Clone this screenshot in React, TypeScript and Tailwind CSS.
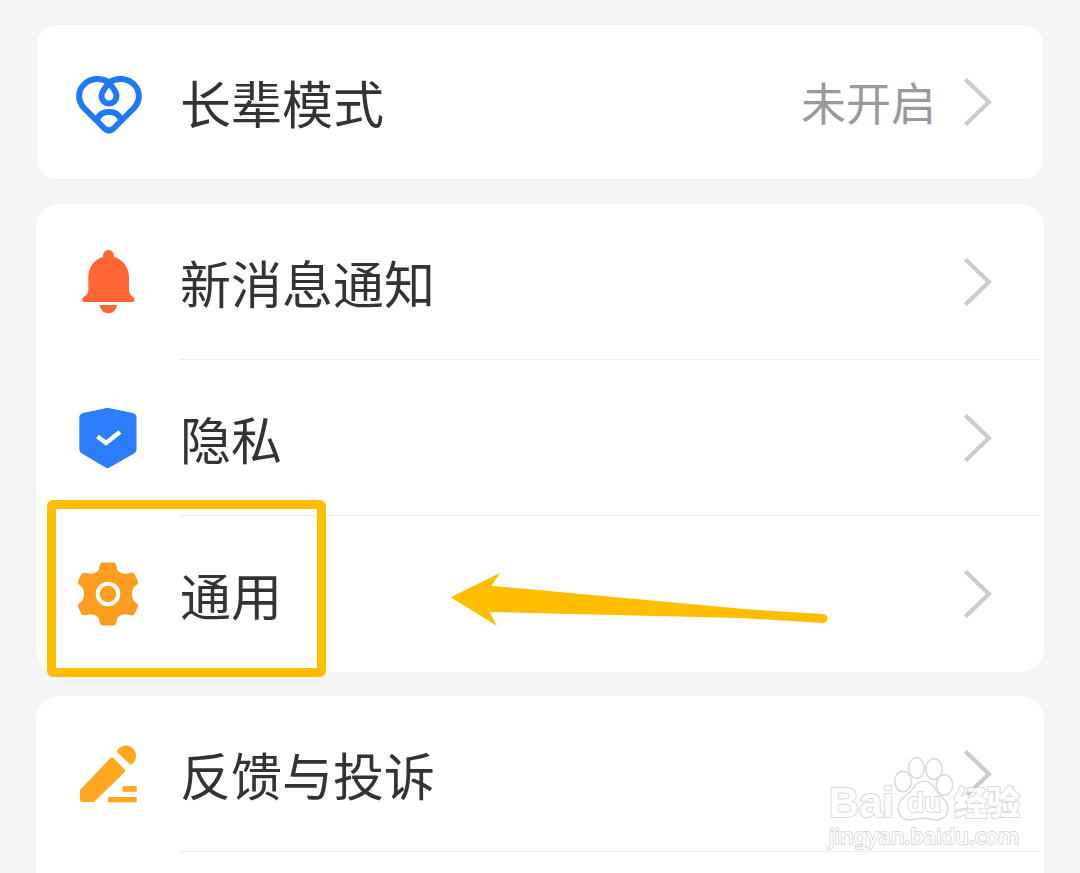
import type { ReactNode } from 'react';

type SettingRowProps = {
  icon: ReactNode;
  label: string;
  value?: string;
  divider?: boolean;
  children?: ReactNode;
};

export default function App() {
  return (
    <main className="flex min-h-screen flex-col gap-6 bg-[#f5f5f5] px-9 pt-6 font-['Noto_Sans_CJK_SC',sans-serif]">
      <section className="rounded-[20px] bg-white inset-ring inset-ring-[#f0f0f0]">
        <SettingRow icon={<IconHeart />} label="长辈模式" value="未开启" />
      </section>

      <section className="rounded-3xl bg-white">
        <SettingRow icon={<IconBell />} label="新消息通知" divider />
        <SettingRow icon={<IconShield />} label="隐私" divider />
        <SettingRow icon={<IconGear />} label="通用">
          <span
            className="absolute -top-4 left-[11px] h-[177px] w-[279px] rounded-md border-[9px] border-[#ffbf00]"
            aria-hidden="true"
          />
          <Arrow className="absolute left-[414px] top-14" />
        </SettingRow>
      </section>

      <section className="grow rounded-t-3xl bg-white">
        <SettingRow icon={<IconPencil />} label="反馈与投诉" divider>
          <Watermark />
        </SettingRow>
      </section>
    </main>
  );
}

function SettingRow({ icon, label, value, divider, children }: SettingRowProps) {
  return (
    <div className="relative">
      <a href="#" className="flex items-center gap-[38px] pl-10">
        <span className="size-[66px] shrink-0">{icon}</span>
        <span
          className={`mr-1 flex grow items-center gap-7 border-b pr-12 ${divider ? 'border-[#eeeeee]' : 'border-transparent'}`}
        >
          <span className="grow whitespace-nowrap pb-[39px] pt-[41px] text-[51px] leading-[75px] text-[#333333]">{label}</span>
          {value && <span className="whitespace-nowrap text-[45px] leading-[75px] text-[#999999]">{value}</span>}
          <Chevron />
        </span>
      </a>
      {children}
    </div>
  );
}

function Chevron() {
  return (
    <svg viewBox="0 0 28 48" fill="none" stroke="#cacaca" strokeWidth="4" className="h-12 w-7 shrink-0" aria-hidden="true">
      <path d="M1.5 1.5 25 24 1.5 46.5" />
    </svg>
  );
}

function Arrow({ className }: { className?: string }) {
  return (
    <svg width="380" height="56" viewBox="0 0 380 56" fill="#ffbf00" className={className} aria-hidden="true">
      <path d="M.7 25.3 50 1 41.3 13.7 297 37.3 373 42a4.5 4.5 0 0 1 0 9L290 46 39.7 40 47 54Z" />
    </svg>
  );
}

function Watermark() {
  return (
    <div
      className="pointer-events-none absolute right-6 top-[61px] flex flex-col text-white opacity-80 [-webkit-text-stroke:2px_#d2d2d2] [paint-order:stroke_fill]"
      aria-hidden="true"
    >
      <div className="flex h-16 items-end">
        <span className="font-['Liberation_Sans',sans-serif] text-[42px] font-bold leading-9">Bai</span>
        <span className="relative">
          <svg width="60" height="64" viewBox="0 0 60 64" fill="white" stroke="#d2d2d2" strokeWidth="3">
            <ellipse cx="9" cy="24.5" rx="7.5" ry="9.5" />
            <ellipse cx="22.5" cy="11" rx="7" ry="9.5" />
            <ellipse cx="40" cy="12" rx="7.5" ry="9.5" />
            <ellipse cx="50.5" cy="28" rx="7.5" ry="9.5" />
            <path d="M30 25c-8 0-10 8-15 12-6 5-11 9-10 16 1 7 7 10 13 9 7-2 15-2 22 0 6 1 12-2 13-9 1-7-4-11-9-16-4-4-6-12-14-12Z" />
          </svg>
          <span className="absolute inset-x-0 bottom-1 text-center font-['Liberation_Sans',sans-serif] text-[28px] font-bold leading-7">
            du
          </span>
        </span>
        <span className="text-[33px] font-black leading-10">经验</span>
      </div>
      <span className="font-['Noto_Sans',sans-serif] text-[22px] leading-7">jingyan.baidu.com</span>
    </div>
  );
}

function IconHeart() {
  return (
    <svg viewBox="0 0 66 66" fill="none" stroke="#1f78f5" strokeWidth="6" strokeLinejoin="round" aria-hidden="true">
      <path d="M33 13.5C25 8 14 9 8 15.5 1.5 22 1.5 32 8 39L28.5 59.5Q33 63.5 37.5 59.5L58 39C64.5 32 64.5 22 58 15.5 52 9 41 8 33 13.5Z" />
      <path d="M33 14C30 18 25.5 22 25.5 27a7.5 7.5 0 0 0 15 0C40.5 22 36 18 33 14Z" />
      <path d="M21.5 50C23 45.5 27.5 43 33 43s10 2.5 11.5 7" />
    </svg>
  );
}

function IconBell() {
  return (
    <svg viewBox="0 0 66 66" fill="#ff6633" aria-hidden="true">
      <path d="M27 8C27 3.5 29 1 32.5 1S38 3.5 38 8C47 10.5 53 18.5 53 28v13c0 3 1.5 5 4 7 2.5 2 1.5 5-1 5H8.5c-2.5 0-3.5-3-1-5 3.5-2 4.8-4 4.8-7V28C12.3 18.5 18 10.5 27 8Z" />
      <path d="M23.7 56H41C40 61.5 37 64.3 32.4 64.3S24.7 61.5 23.7 56Z" />
    </svg>
  );
}

function IconShield() {
  return (
    <svg viewBox="0 0 66 66" aria-hidden="true">
      <path
        d="M29.5 3.2q2-.8 4 0L57 8q3.5 1 3.5 4.5V44q0 3-2.5 4.5L33.5 62.5q-2 1.2-4 0L6 48.5Q3.3 47 3.3 44V12.5Q3.3 9 7 8Z"
        fill="#2b7dfc"
      />
      <path d="M21.5 31.5 30 38 44 27" fill="none" stroke="white" strokeWidth="4.5" />
    </svg>
  );
}

function IconGear() {
  return (
    <svg viewBox="0 0 66 66" aria-hidden="true">
      <path
        d="M26.5 1.5H37.5Q39.5 1.5 40 3.5L41.3 9Q44 12.5 50 12.8L55.5 11.8Q57.5 11.5 58.5 13L62 20.5Q62.5 22.3 61 23.5L57.5 26.5Q54.5 33 57.5 39.5L61 42.5Q62.5 43.7 62 45.5L58.5 53Q57.5 54.5 55.5 54.2L50 53.2Q44 53.5 41.3 57L40 62.5Q39.5 64.5 37.5 64.5H26.5Q24.5 64.5 24 62.5L22.7 57Q20 53.5 14 53.2L8.5 54.2Q6.5 54.5 5.5 53L2 45.5Q1.5 43.7 3 42.5L6.5 39.5Q9.5 33 6.5 26.5L3 23.5Q1.5 22.3 2 20.5L5.5 13Q6.5 11.5 8.5 11.8L14 12.8Q20 12.5 22.7 9L24 3.5Q24.5 1.5 26.5 1.5Z"
        fill="#fd9d1f"
      />
      <circle cx="32" cy="33" r="10.3" fill="none" stroke="white" strokeWidth="4" />
    </svg>
  );
}

function IconPencil() {
  return (
    <svg viewBox="0 0 66 66" fill="#fda820" aria-hidden="true">
      <path d="M4 49 34.5 17q1.5-1.5 3 0L48.5 28.2q1.5 1.5 0 3L18 61H6q-2 0-2-2Z" />
      <path d="M41.5 9C45 4 52 2.5 57 7.5S60.5 19 56 23.2q-1.2.8-2.2 0L41.5 11.5q-1-1.2 0-2.5Z" />
      <path d="M46.5 45h14.2v5.7H46.5zM32 56h28.7v5.2H32z" />
    </svg>
  );
}
